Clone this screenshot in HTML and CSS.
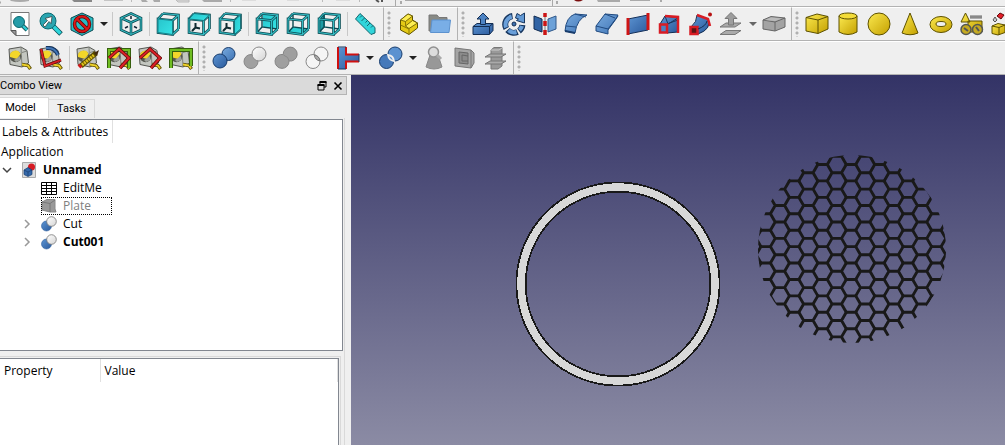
FILE: index.html
```html
<!DOCTYPE html>
<html lang="en">
<head>
<meta charset="utf-8">
<title>Unnamed</title>
<link rel="stylesheet" href="styles.css">
</head>
<body>
<svg class="sprite" aria-hidden="true">
  <defs>
    <linearGradient id="blue" x1="0" y1="0" x2="1" y2="1"><stop offset="0" stop-color="#5d95d3"/><stop offset="1" stop-color="#2b5a9c"/></linearGradient>
    <linearGradient id="sky" x1="0" y1="0" x2="1" y2="1"><stop offset="0" stop-color="#78aade"/><stop offset="1" stop-color="#3f74b5"/></linearGradient>
    <linearGradient id="gold" x1="0" y1="0" x2="1" y2="1"><stop offset="0" stop-color="#fbe94f"/><stop offset="1" stop-color="#c4a000"/></linearGradient>
    <linearGradient id="silver" x1="0" y1="0" x2="1" y2="1"><stop offset="0" stop-color="#fff"/><stop offset="1" stop-color="#d4d4d4"/></linearGradient>
    <linearGradient id="cyan" x1="0" y1="0" x2="1" y2="1"><stop offset="0" stop-color="#27c4cb"/><stop offset="1" stop-color="#36e4e6"/></linearGradient>
    <path id="cube-lines" d="M7 1.500 22.500 3V17M2 7 7 1.500M16.500 8.500 22.500 3M16.500 22.500 22.500 17M2 7 16.500 8.500V22.500L2 20.500Z"/>
    <path id="cube-back" d="M7 1.500V15L22.500 17M7 15 2 20.500"/>
    <path id="iso-lines" d="M12 1.500 22 6V18L12 22.500 2 18V6ZM2 6 12 10.500 22 6M12 10.500V22.500"/>
    <path id="triad" d="M8.500 15.500V11M8.500 15.500 13 16.500M8.500 15.500 5 19"/>
    <g id="tape-body">
      <path d="M1 3 13 1 19 4.500 20.500 17 14 21 2 18.500Z" fill="#c3c6c0" stroke="#555753"/>
      <path d="M13 1.500 14 20.500M19 5 14 6.500" stroke="#80837c" fill="none"/>
      <circle cx="7.500" cy="10.500" r="5.800" fill="#55574f"/>
      <path d="M2 11a5.500 5.500 0 0 1 10.500-3L9 13Z" fill="#f3d62a"/>
      <path d="M6 14 12 10 12.500 14 8 16Z" fill="#9da09a"/>
      <path d="M14 18.500 20 19.500 22.500 23" stroke="#5b4c00" stroke-width="3.500" fill="none"/>
      <path d="M14 18.500 20 19.500 22 22.500" stroke="#ecd02a" stroke-width="1.800" fill="none"/>
    </g>
    <symbol id="fit-all" viewBox="0 0 24 24"><path d="M3 .5H21V23.500H8L3 18.500Z" fill="#fff" stroke="#777"/><path d="M3 18.500H8V23.500Z" fill="#999" stroke="#555"/><path d="M14 13 19 18" stroke="#0b3a40" stroke-width="4"/><path d="M14 13 19 18" stroke="#2cc7ce" stroke-width="2.500"/><circle cx="11" cy="10" r="5.500" fill="#259ca8" stroke="#0b6870"/></symbol>
    <symbol id="fit-selection" viewBox="0 0 24 24"><path d="M13 13 22 22" stroke="#0b4a50" stroke-width="5"/><path d="M13 13 21.500 21.500" stroke="#2cd4da" stroke-width="3.500"/><circle cx="9" cy="9" r="8" fill="#2aa5b0" stroke="#0b6a72"/><path d="M4 13 8.500 8.500 6 6.500 13 4.500 12 11.500 10 9.500 6 15Z" fill="#fff" stroke="#333" stroke-width=".7"/></symbol>
    <symbol id="draw-style" viewBox="0 0 24 24"><path d="M12 1 23 6V18L12 23.500 1 18V6Z" fill="#29bcc4" stroke="#0b4a50"/><circle cx="12" cy="12" r="7.500" fill="none" stroke="#5c0505" stroke-width="3.500"/><path d="M7 7 17 17" stroke="#5c0505" stroke-width="3.500"/><circle cx="12" cy="12" r="7.500" fill="none" stroke="#dc1717" stroke-width="2"/><path d="M7 7 17 17" stroke="#dc1717" stroke-width="2"/></symbol>
    <symbol id="view-iso" viewBox="0 0 24 24"><use href="#iso-lines" class="edge-dark"/><use href="#iso-lines" class="edge-light"/><path d="M12 4V7M6 16 9 14.500M18 16 15 14.500" stroke="#123" stroke-width="1.500"/></symbol>
    <symbol id="view-front" viewBox="0 0 24 24"><use href="#cube-lines" class="edge-dark"/><use href="#cube-lines" class="edge-light"/><path d="M2 7 16.500 8.500V22.500L2 20.500Z" fill="url(#cyan)" stroke="#16838b"/></symbol>
    <symbol id="view-top" viewBox="0 0 24 24"><use href="#triad" class="triad"/><use href="#cube-lines" class="edge-dark"/><use href="#cube-lines" class="edge-light"/><path d="M2 7 7 1.500 22.500 3 16.500 8.500Z" fill="url(#cyan)" stroke="#16737b"/></symbol>
    <symbol id="view-right" viewBox="0 0 24 24"><use href="#triad" class="triad"/><use href="#cube-lines" class="edge-dark"/><use href="#cube-lines" class="edge-light"/><path d="M16.500 8.500 22.500 3V17L16.500 22.500Z" fill="url(#cyan)" stroke="#16737b"/></symbol>
    <symbol id="view-rear" viewBox="0 0 24 24"><path d="M8 2 22 3.500V16.500L8 15Z" fill="url(#cyan)"/><use href="#cube-back" class="edge-back"/><use href="#cube-lines" class="edge-dark"/><use href="#cube-lines" class="edge-light"/></symbol>
    <symbol id="view-bottom" viewBox="0 0 24 24"><path d="M2 20.500 7 15 22.500 17 16.500 22.500Z" fill="url(#cyan)"/><use href="#cube-back" class="edge-back"/><use href="#cube-lines" class="edge-dark"/><use href="#cube-lines" class="edge-light"/></symbol>
    <symbol id="view-left" viewBox="0 0 24 24"><path d="M2 7 8 1.500V15L2 20.500Z" fill="#1c9ba3"/><use href="#cube-back" class="edge-back"/><use href="#cube-lines" class="edge-dark"/><use href="#cube-lines" class="edge-light"/></symbol>
    <symbol id="ruler" viewBox="0 0 24 24"><path d="M6 1.500 21 15.500V21L17 22.500 1.500 7Z" fill="#31d5da" stroke="#15666e"/><path d="M8 3.500 6 5.500M10.500 6 7.500 9M13.500 8.500 11.500 10.500M16 11 13 14M19 13.500 17 15.500" stroke="#15666e"/></symbol>
    <symbol id="part" viewBox="0 0 24 24"><path d="M3.500 8 11 2 15.500 4V8L20.500 11V16L12 22.500 3.500 18Z" fill="#e5ca15" stroke="#5f5200"/><path d="M3.500 8 11 2 15.500 4 8.500 9.500ZM8.500 14 15.500 8.500 20.500 11 12 16.500Z" fill="#fdee52" stroke="#5f5200" stroke-width=".8"/><path d="M8.500 9.500V14M12 16.500V22M3.500 13 12 17" stroke="#8d7a05" fill="none"/></symbol>
    <symbol id="folder" viewBox="0 0 24 24"><path d="M1 3H9L11 5.500H19V19H1Z" fill="#888a85" stroke="#777"/><path d="M4 8H22.500L21 20.500H2.500Z" fill="#79aee6" stroke="#5c92cf"/></symbol>
    <symbol id="extrude" viewBox="0 0 24 24"><path d="M2 14.500 6 11.500H22V18.500L18.500 22.500H2Z" fill="url(#blue)" stroke="#132d52"/><path d="M2 14.500H18.500L22 11.500M18.500 14.500V22" fill="none" stroke="#132d52"/><path d="M12 1 18 7H14.500V12.500H9.500V7H6Z" fill="#4d83c4" stroke="#132d52"/></symbol>
    <symbol id="revolve" viewBox="0 0 24 24"><g fill="none" stroke="#17365f" stroke-width="6"><path d="M10.500 4A8.500 8.500 0 0 0 4.300 16.500"/><path d="M5.500 18A8.500 8.500 0 0 0 15.500 20"/><path d="M17 19A8.500 8.500 0 0 0 20.400 13"/></g><g fill="none" stroke="#6a9fd9" stroke-width="4"><path d="M9.700 4.500A8.500 8.500 0 0 0 4 15.500"/><path d="M6.500 18.300A8.500 8.500 0 0 0 14.500 20"/><path d="M17.500 18A8.500 8.500 0 0 0 20 14"/></g><path d="M15 1.500 18.500 3.500 22.500 1V11L14.500 8.500 16.500 7 13.500 6Z" fill="#6399d4" stroke="#17365f"/><circle cx="12" cy="12" r="2" fill="#3d70af" stroke="#132d52"/></symbol>
    <symbol id="mirror" viewBox="0 0 24 24"><path d="M1 4 9 7V20L1 17Z" fill="#3164a5" stroke="#132d52"/><path d="M23 4 15 7V20L23 17Z" fill="#6ca1d8" stroke="#30588a"/><path d="M12 1V5M12 9V14M12 18V23" stroke="#cc1515" stroke-width="3.500"/><path d="M12 5V9M12 14V18" stroke="#777"/></symbol>
    <symbol id="fillet" viewBox="0 0 24 24"><path d="M1 19Q2 5 11 2L23 3Q13 7 11 21Z" fill="url(#sky)" stroke="#204a80"/><path d="M2 14 12 15M11 2 22 5" stroke="#244f87" fill="none"/><path d="M1 19 11 21" stroke="#183c6c" stroke-width="2"/></symbol>
    <symbol id="chamfer" viewBox="0 0 24 24"><path d="M1 14 10 2 23 3 21 7 13 18V22L1 19Z" fill="url(#sky)" stroke="#204a80"/><path d="M1 14 13 17 23 4M10 2 20 6" stroke="#204a80" fill="none"/></symbol>
    <symbol id="ruled" viewBox="0 0 24 24"><path d="M2 7 22 3V18L2 22Z" fill="url(#blue)" stroke="#15315a"/><path d="M2 6V23M22 1V18" stroke="#cf1515" stroke-width="3"/></symbol>
    <symbol id="loft" viewBox="0 0 24 24"><path d="M3 12 8 4 21 6V20L10 21Z" fill="url(#blue)" stroke="#132d52"/><path d="M8 4 11 12 21 6M10 12 21 8" fill="none" stroke="#17365f"/><path d="M8 4 21 5V21" fill="none" stroke="#d81c24" stroke-width="2.500"/><path d="M3 12.500H10V20.500H3Z" fill="#4c82c4" stroke="#d81c24" stroke-width="2.500"/></symbol>
    <symbol id="sweep" viewBox="0 0 24 24"><path d="M3 15Q9 10 9 3L20 7Q24 17 10 22Z" fill="url(#blue)" stroke="#132d52"/><path d="M9 3 20 7 22 14" fill="none" stroke="#d81c24" stroke-width="2.500"/><path d="M2.500 15H9.500V22H2.500Z" fill="#5a1515" stroke="#d81c24" stroke-width="2.500"/><path d="M10 17Q18 14 19 9" stroke="#132d52" fill="none"/><circle cx="22" cy="2.500" r="2" fill="#b71111"/></symbol>
    <symbol id="offset" viewBox="0 0 24 24"><path d="M7 11H22L16 15H1ZM7 18.500H22L16 22.500H1Z" fill="#aaa" stroke="#777"/><path d="M12 .5 18 6.500H14.500V13H9.500V6.500H6Z" fill="#9d9d9d" stroke="#777"/></symbol>
    <symbol id="thickness" viewBox="0 0 24 24"><path d="M1 8 9 4.500 23 6V15L13 19 1 17Z" fill="#a3a3a3" stroke="#666"/><path d="M1 8 13 10 23 6M13 10V19" stroke="#666" fill="none"/><path d="M3 8 9 5.500 20 6.500 13 9Z" fill="#bbb"/></symbol>
    <symbol id="box" viewBox="0 0 24 24"><path d="M1 5.500 12 2 23 4.500V17L13 21.500 1 19Z" fill="url(#gold)" stroke="#5d5100"/><path d="M1 5.500 13 8 23 4.500M13 8V21.500" fill="none" stroke="#5d5100"/></symbol>
    <symbol id="cylinder" viewBox="0 0 24 24"><path d="M3 4V20Q12 25 21 20V4Z" fill="url(#gold)" stroke="#5d5100"/><ellipse cx="12" cy="4" rx="9" ry="3" fill="#f3dc38" stroke="#5d5100"/></symbol>
    <symbol id="sphere" viewBox="0 0 24 24"><circle cx="12" cy="12" r="11" fill="url(#gold)" stroke="#5d5100"/></symbol>
    <symbol id="cone" viewBox="0 0 24 24"><path d="M12 1 20 21Q12 24.500 4 21Z" fill="url(#gold)" stroke="#5d5100"/></symbol>
    <symbol id="torus" viewBox="0 0 24 24"><ellipse cx="12" cy="12.500" rx="11" ry="8" fill="url(#gold)" stroke="#5d5100"/><ellipse cx="12" cy="12" rx="5" ry="2.500" fill="#efefef" stroke="#5d5100"/></symbol>
    <symbol id="primitives" viewBox="0 0 24 24"><path d="M8 9H22V20H8ZM5.500 1 10 10H1Z" fill="url(#gold)" stroke="#5d5100"/><path d="M10 5H22" stroke="#666" stroke-width="3"/><path d="M10 5H22" stroke="#aaa"/><g fill="#c5aa21" stroke="#555753" stroke-width="1.500"><circle cx="6" cy="17.500" r="5"/><circle cx="17.500" cy="17.500" r="5"/></g><path d="M4 16 8 19M16 15 19 19" stroke="#555" stroke-width="2"/></symbol>
    <symbol id="builder" viewBox="0 0 24 24"><path d="M1 14 7 11.500 14 13V20.500L7 23 1 21.500Z" fill="url(#gold)" stroke="#5d5100"/><path d="M1 14 8 15.500 14 13M8 15.500V23" fill="none" stroke="#5d5100"/><path d="M2 8 4 5 6 8 4 10Z" fill="#ccc" stroke="#555"/><path d="M6 4 9 1 13 3 10 7Z" fill="#e51e28" stroke="#650909"/></symbol>
    <symbol id="measure-linear" viewBox="0 0 24 24"><use href="#tape-body"/></symbol>
    <symbol id="measure-angular" viewBox="0 0 24 24"><use href="#tape-body"/><path d="M7 2Q16 1 19 9" fill="none" stroke="#17365f" stroke-width="4"/><path d="M7 2Q16 1 19 9" fill="none" stroke="#4276b6" stroke-width="2"/><path d="M2 3 6 20 22 14" fill="none" stroke="#5e0909" stroke-width="3"/><path d="M2 3 6 20 22 14" fill="none" stroke="#d92027" stroke-width="1.800"/></symbol>
    <symbol id="measure-refresh" viewBox="0 0 24 24"><use href="#tape-body"/><path d="M5 20 20 7" stroke="#574900" stroke-width="5"/><path d="M6 19 18 9" stroke="#dfc11b" stroke-width="3" stroke-dasharray="2 .7"/><path d="M3 21 5 19" stroke="#cf1b1b" stroke-width="4"/><path d="M18 7 23 4 21 10Z" fill="#432a10"/></symbol>
    <symbol id="measure-toggle" viewBox="0 0 24 24"><use href="#tape-body"/><path d="M2 22V4H22V22" fill="none" stroke="#365f0e" stroke-width="4"/><path d="M2 22V4H22V22" fill="none" stroke="#70be23" stroke-width="2"/><path d="M2 12 12 3 22 12 13 22" fill="none" stroke="#5e0909" stroke-width="3.500"/><path d="M2 12 12 3 22 12 13 22" fill="none" stroke="#db2028" stroke-width="2"/></symbol>
    <symbol id="measure-3d" viewBox="0 0 24 24"><use href="#tape-body"/><path d="M2 12 12 3 22 12 13 22" fill="none" stroke="#5e0909" stroke-width="3.500"/><path d="M2 12 12 3 22 12 13 22" fill="none" stroke="#db2028" stroke-width="2"/></symbol>
    <symbol id="measure-delta" viewBox="0 0 24 24"><use href="#tape-body"/><path d="M2 22V4H22V20" fill="none" stroke="#365f0e" stroke-width="4"/><path d="M2 22V4H22V20" fill="none" stroke="#70be23" stroke-width="2"/></symbol>
    <symbol id="boolean" viewBox="0 0 24 24"><circle cx="16.500" cy="8" r="6.500" fill="url(#sky)" stroke="#183d6e"/><circle cx="8" cy="15" r="7" fill="url(#blue)" stroke="#183d6e"/></symbol>
    <symbol id="cut-off" viewBox="0 0 24 24"><circle cx="8" cy="15.500" r="7" fill="#a0a0a0" stroke="#888"/><circle cx="16" cy="8" r="7" fill="url(#silver)" stroke="#888"/></symbol>
    <symbol id="union" viewBox="0 0 24 24"><path d="M9.200 8.500A7 7 0 1 1 15 15A7 7 0 1 1 9.200 8.500Z" fill="#9f9f9f" stroke="#858585"/><path d="M9.500 9Q15 11 15 15" fill="none" stroke="#8a8a8a"/></symbol>
    <symbol id="common" viewBox="0 0 24 24"><circle cx="16" cy="8" r="7" fill="#f5f5f5" stroke="#888"/><circle cx="8" cy="15.500" r="7" fill="#f5f5f5" stroke="#888"/><path d="M9.300 9A7 7 0 0 1 15 15A7 7 0 0 1 9.300 9Z" fill="#aaa" stroke="#777"/></symbol>
    <symbol id="join" viewBox="0 0 24 24"><path d="M1 1.500H9.500V8.500H23V16H9.500V23H1Z" fill="url(#blue)"/><path d="M2 1V23M10 1V8.500H23M10 23V15.500H23" fill="none" stroke="#cf1010" stroke-width="2"/><path d="M2 1H10M2 23H10M23 8V16" stroke="#17365f"/></symbol>
    <symbol id="split" viewBox="0 0 24 24"><circle cx="16" cy="8" r="7" fill="#5b92d0" stroke="#183d6e"/><circle cx="7.500" cy="15.500" r="7" fill="#4579ba" stroke="#183d6e"/><path d="M9 9A7 7 0 0 1 15 15A7 7 0 0 1 9 9Z" fill="#5b92d0" stroke="#eee" stroke-width="1.800"/></symbol>
    <symbol id="check" viewBox="0 0 24 24"><path d="M8 9H16L20 21Q12 25 4 21Z" fill="#989898" stroke="#888"/><circle cx="11.500" cy="6" r="5" fill="#ddd" stroke="#909090" stroke-width="1.500"/><path d="M15 9 19 13" stroke="#aaa" stroke-width="3"/></symbol>
    <symbol id="section" viewBox="0 0 24 24"><path d="M2 2 18 4 21 7V17L18 22 2 20Z" fill="#a5a5a5" stroke="#777"/><path d="M6 6 15 7V18L6 17ZM9 9V15M9 9 15 10M9 15H15" fill="#8b8b8b" stroke="#666"/><path d="M18 4V22" stroke="#777"/></symbol>
    <symbol id="cross-sections" viewBox="0 0 24 24"><path d="M7 4 10 1.500H18V20L14 23H7Z" fill="#999" stroke="#777"/><path d="M1 11 6 8H22L17 11ZM1 18 6 15H22L17 18Z" fill="#aaa" stroke="#777"/><path d="M7 4H15L18 2" fill="none" stroke="#ccc"/></symbol>
    <symbol id="document" viewBox="0 0 16 16"><path d="M1.500.5H14.500V15.500H1.500Z" fill="#ddd" stroke="#aaa"/><circle cx="10.500" cy="5" r="3.500" fill="#d51b24"/><path d="M3 8 7 5.500 11 8V12.500L7 14.500 3 12.500Z" fill="#3569aa" stroke="#183d6e" stroke-width=".7"/><path d="M3 8 7 10 11 8M7 10V14" stroke="#183d6e" fill="none" stroke-width=".7"/></symbol>
    <symbol id="sheet" viewBox="0 0 16 16"><path d="M.5 2.500H15.500V14.500H.5ZM.5 5.500H15.500M.5 8.500H15.500M.5 11.500H15.500M5.500 2V14M10.500 2V14" fill="#fff" stroke="#000"/></symbol>
    <symbol id="plate" viewBox="0 0 16 16"><path d="M1 4 6 1.500H14V11L15 14H9L1 12Z" fill="#999" stroke="#888"/><path d="M1 4 9 5.500 14 2M9 5.500V14" fill="none" stroke="#777"/></symbol>
    <symbol id="cut" viewBox="0 0 16 16"><circle cx="5.500" cy="10" r="5" fill="url(#blue)" stroke="#3162a0" stroke-width=".6"/><circle cx="10.500" cy="5.500" r="4.800" fill="url(#silver)" stroke="#777" stroke-width=".8"/></symbol>
  </defs>
</svg>

<div class="window">
  <header class="toolbars">
    <div class="toolbar-row toolbar-row-clipped">
      <svg width="670" height="6" viewBox="0 0 670 6" aria-hidden="true">
        <path d="M10 0H29V1Q20 3 11 1Z" fill="#aaa"/><path d="M72 0H92V2H74Z" fill="#888"/><path d="M104 0H123V1H104Z" fill="#c5c5c5"/>
        <path d="M141 0H146L148 2H142ZM153 0H160V2H154Z" fill="#aaa"/><path d="M176 0H189V2H178Z" fill="#ddd" stroke="#bbb"/><path d="M202 0H222V2H204Z" fill="#aaa"/>
        <path d="M242 0H256M287 0H299M336 0H350" stroke="#ccc"/><path d="M376 0 379 2M382 0V2" stroke="#555" stroke-width="2"/>
        <path d="M131.500 0V2M230.500 0V2M322.500 0V2M359.500 0V2" stroke="#bbb"/>
        <path d="M395.500 0V6M552.500 0V6M405 .5H551" stroke="#aaa"/><path d="M0 1.500V3.500M401 1V4M557 1V4" stroke="#aaa" stroke-width="2"/>
        <path d="M574 0H583Q578 3 574 0Z" fill="#7a0c0c"/><path d="M597 0H620V2H598ZM630 0H650V1H630ZM660 0H662V2H660Z" fill="#aaa"/>
      </svg>
    </div>
    <div class="toolbar-row">
      <div class="toolbar toolbar-first" role="toolbar" aria-label="View">
        <button class="tool" aria-label="Fit all"><svg><use href="#fit-all"/></svg></button>
        <button class="tool" aria-label="Fit selection"><svg><use href="#fit-selection"/></svg></button>
        <button class="tool" aria-label="Draw style"><svg><use href="#draw-style"/></svg></button>
        <button class="menu-arrow" aria-label="Draw style options"></button>
        <span class="separator"></span>
        <button class="tool" aria-label="Isometric"><svg><use href="#view-iso"/></svg></button>
        <span class="separator"></span>
        <button class="tool" aria-label="Front"><svg><use href="#view-front"/></svg></button>
        <button class="tool" aria-label="Top"><svg><use href="#view-top"/></svg></button>
        <button class="tool" aria-label="Right"><svg><use href="#view-right"/></svg></button>
        <span class="separator"></span>
        <button class="tool" aria-label="Rear"><svg><use href="#view-rear"/></svg></button>
        <button class="tool" aria-label="Bottom"><svg><use href="#view-bottom"/></svg></button>
        <button class="tool" aria-label="Left"><svg><use href="#view-left"/></svg></button>
        <span class="separator"></span>
        <button class="tool" aria-label="Measure distance"><svg><use href="#ruler"/></svg></button>
      </div>
      <div class="toolbar" role="toolbar" aria-label="Structure">
        <span class="grip"></span>
        <button class="tool" aria-label="Create part"><svg><use href="#part"/></svg></button>
        <button class="tool" aria-label="Create group"><svg><use href="#folder"/></svg></button>
      </div>
      <div class="toolbar" role="toolbar" aria-label="Part tools">
        <span class="grip"></span>
        <button class="tool" aria-label="Extrude"><svg><use href="#extrude"/></svg></button>
        <button class="tool" aria-label="Revolve"><svg><use href="#revolve"/></svg></button>
        <button class="tool" aria-label="Mirror"><svg><use href="#mirror"/></svg></button>
        <button class="tool" aria-label="Fillet"><svg><use href="#fillet"/></svg></button>
        <button class="tool" aria-label="Chamfer"><svg><use href="#chamfer"/></svg></button>
        <button class="tool" aria-label="Ruled surface"><svg><use href="#ruled"/></svg></button>
        <button class="tool" aria-label="Loft"><svg><use href="#loft"/></svg></button>
        <button class="tool" aria-label="Sweep"><svg><use href="#sweep"/></svg></button>
        <button class="tool" aria-label="Offset"><svg><use href="#offset"/></svg></button>
        <button class="menu-arrow menu-arrow-dim" aria-label="Offset options"></button>
        <button class="tool" aria-label="Thickness"><svg><use href="#thickness"/></svg></button>
      </div>
      <div class="toolbar toolbar-last" role="toolbar" aria-label="Solids">
        <span class="grip"></span>
        <button class="tool" aria-label="Box"><svg><use href="#box"/></svg></button>
        <button class="tool" aria-label="Cylinder"><svg><use href="#cylinder"/></svg></button>
        <button class="tool" aria-label="Sphere"><svg><use href="#sphere"/></svg></button>
        <button class="tool" aria-label="Cone"><svg><use href="#cone"/></svg></button>
        <button class="tool" aria-label="Torus"><svg><use href="#torus"/></svg></button>
        <button class="tool" aria-label="Primitives"><svg><use href="#primitives"/></svg></button>
        <button class="tool" aria-label="Shape builder"><svg><use href="#builder"/></svg></button>
      </div>
    </div>
    <div class="toolbar-row">
      <div class="toolbar toolbar-first" role="toolbar" aria-label="Measure">
        <button class="tool" aria-label="Measure linear"><svg><use href="#measure-linear"/></svg></button>
        <button class="tool" aria-label="Measure angular"><svg><use href="#measure-angular"/></svg></button>
        <span class="separator"></span>
        <button class="tool" aria-label="Refresh"><svg><use href="#measure-refresh"/></svg></button>
        <button class="tool" aria-label="Toggle all"><svg><use href="#measure-toggle"/></svg></button>
        <button class="tool" aria-label="Toggle 3D"><svg><use href="#measure-3d"/></svg></button>
        <button class="tool" aria-label="Toggle delta"><svg><use href="#measure-delta"/></svg></button>
      </div>
      <div class="toolbar" role="toolbar" aria-label="Boolean">
        <span class="grip"></span>
        <button class="tool" aria-label="Boolean"><svg><use href="#boolean"/></svg></button>
        <button class="tool" aria-label="Cut"><svg><use href="#cut-off"/></svg></button>
        <button class="tool" aria-label="Union"><svg><use href="#union"/></svg></button>
        <button class="tool" aria-label="Intersection"><svg><use href="#common"/></svg></button>
        <button class="tool" aria-label="Join"><svg><use href="#join"/></svg></button>
        <button class="menu-arrow" aria-label="Join options"></button>
        <button class="tool" aria-label="Split"><svg><use href="#split"/></svg></button>
        <button class="menu-arrow" aria-label="Split options"></button>
        <button class="tool" aria-label="Check geometry"><svg><use href="#check"/></svg></button>
        <button class="tool" aria-label="Section"><svg><use href="#section"/></svg></button>
        <button class="tool" aria-label="Cross-sections"><svg><use href="#cross-sections"/></svg></button>
      </div>
      <div class="toolbar toolbar-last"><span class="grip"></span></div>
    </div>
  </header>

  <div class="workspace">
    <aside class="combo">
      <div class="dock-title">
        <span class="dock-name">Combo View</span>
        <button class="dock-button" aria-label="Float"><svg viewBox="0 0 10 10"><path d="M3 3V1H9V6H7M1 4H7V9H1Z" fill="none" stroke="#000"/><path d="M2.500 1H9.500M.5 4H7.500" stroke="#000" stroke-width="2"/></svg></button>
        <button class="dock-button" aria-label="Close"><svg viewBox="0 0 10 10"><path d="M1.500 1.500 8.500 8.500M8.500 1.500 1.500 8.500" stroke="#000" stroke-width="1.600"/></svg></button>
      </div>
      <div class="tabs" role="tablist">
        <button class="tab tab-active" role="tab" aria-selected="true">Model</button>
        <button class="tab" role="tab" aria-selected="false">Tasks</button>
      </div>
      <div class="tab-pane">
        <section class="tree">
          <div class="tree-header">Labels &amp; Attributes</div>
          <div class="tree-root">Application</div>
          <ul class="tree-list">
            <li class="tree-row"><button class="expander" aria-label="Collapse"><svg viewBox="0 0 10 10"><path d="M1 3 5 7 9 3" fill="none" stroke="#444" stroke-width="1.500"/></svg></button><svg class="node-icon"><use href="#document"/></svg><span class="node-label strong">Unnamed</span></li>
            <li class="tree-row child"><svg class="node-icon"><use href="#sheet"/></svg><span class="node-label">EditMe</span></li>
            <li class="tree-row child"><span class="focused"><svg class="node-icon"><use href="#plate"/></svg><span class="node-label dim">Plate</span></span></li>
            <li class="tree-row branch"><button class="expander" aria-label="Expand"><svg viewBox="0 0 10 10"><path d="M3 1 7 5 3 9" fill="none" stroke="#999" stroke-width="1.500"/></svg></button><svg class="node-icon"><use href="#cut"/></svg><span class="node-label">Cut</span></li>
            <li class="tree-row branch"><button class="expander" aria-label="Expand"><svg viewBox="0 0 10 10"><path d="M3 1 7 5 3 9" fill="none" stroke="#999" stroke-width="1.500"/></svg></button><svg class="node-icon"><use href="#cut"/></svg><span class="node-label strong">Cut001</span></li>
          </ul>
        </section>
        <section class="property-frame">
          <div class="property-view">
            <table class="properties">
              <thead><tr><th class="col-property">Property</th><th>Value</th></tr></thead>
            </table>
          </div>
        </section>
      </div>
    </aside>
    <main class="viewport">
      <svg class="scene" viewBox="0 0 654 370" preserveAspectRatio="xMinYMin meet" role="img" aria-label="Ring and hexagonal mesh">
        <defs>
          <path id="cell-pair" d="M-4.740 0H4.740L9.480 8.210H18.960L23.700 0M9.480 8.210 4.740 16.420M18.960 8.210 23.700 16.420"/>
          <g id="four-pairs"><use href="#cell-pair"/><use href="#cell-pair" x="28.440"/><use href="#cell-pair" x="56.880"/><use href="#cell-pair" x="85.320"/></g>
          <g id="mesh-row"><use href="#four-pairs" x="-113.760"/><use href="#four-pairs"/></g>
          <g id="four-rows"><use href="#mesh-row"/><use href="#mesh-row" y="16.420"/><use href="#mesh-row" y="32.840"/><use href="#mesh-row" y="49.260"/></g>
          <clipPath id="disc"><circle cx="501" cy="174" r="94"/></clipPath>
        </defs>
        <g shape-rendering="crispEdges" fill="none">
          <circle cx="267" cy="209" r="97" stroke="#191919" stroke-width="11"/>
          <circle cx="267" cy="209" r="97" stroke="#d8d8d8" stroke-width="7.500"/>
        </g>
        <g clip-path="url(#disc)">
          <g transform="translate(500 89.500)" fill="none" stroke="#191919" stroke-width="2.900" stroke-linecap="round">
            <use href="#four-rows" y="-16.420"/><use href="#four-rows" y="49.260"/><use href="#four-rows" y="114.940"/>
          </g>
        </g>
      </svg>
    </main>
  </div>
</div>
</body>
</html>
```

FILE: styles.css
```css
* { box-sizing: border-box; }

body {
  margin: 0;
  font-family: "Open Sans", "Noto Sans", sans-serif;
  font-size: 12px;
  line-height: 18px;
  color: #000;
}

button {
  margin: 0;
  padding: 0;
  border: 0;
  background: none;
  font: inherit;
  color: inherit;
}

svg { display: block; }
.sprite { position: absolute; width: 0; height: 0; }

.edge-dark { fill: none; stroke: #0b4a52; stroke-width: 2.6; }
.edge-light { fill: none; stroke: #35bcc3; stroke-width: 1.1; }
.edge-back { fill: none; stroke: #0b4a52; stroke-width: 1.4; }
.triad { fill: none; stroke: #102a30; stroke-width: 2; }

.window {
  display: flex;
  flex-direction: column;
  height: 100vh;
  overflow: hidden;
  background: #efefef;
}

.toolbars { flex: none; }

.toolbar-row {
  display: flex;
  height: 34px;
  overflow: hidden;
  border-bottom: 1px solid #b2b2b2;
}

.toolbar-row-clipped { height: 7px; }

.toolbar {
  display: flex;
  flex: none;
  align-items: center;
  padding-right: 1px;
  border-top: 1px solid #fff;
  border-right: 1px solid #b2b2b2;
}

.toolbar-first { padding-left: 5px; }
.toolbar-last { flex: 1 0 auto; border-right: 0; }

.tool {
  flex: none;
  width: 31px;
  padding: 0 4px 0 3px;
}

.tool svg { width: 24px; height: 24px; }

.menu-arrow {
  display: flex;
  justify-content: center;
  width: 12px;
}

.menu-arrow::after {
  content: "";
  border: 4px solid transparent;
  border-top-color: #222;
  border-bottom: 0;
}

.menu-arrow-dim::after { border-top-color: #666; }

.separator {
  width: 6px;
  height: 24px;
  background: linear-gradient(#c8c8c8, #c8c8c8) 2px 0 / 1px 100% no-repeat;
}

.grip {
  width: 10px;
  height: 26px;
  background: radial-gradient(circle at 2px 2px, #b0b0b0 1px, transparent 2px) 3px 0 / 4px 5px repeat-y;
}

.workspace {
  display: flex;
  flex: 1;
  min-height: 0;
}

.combo {
  display: flex;
  flex: none;
  flex-direction: column;
  width: 351px;
  padding: 1px 4px 0 0;
}

.dock-title {
  display: flex;
  align-items: center;
  gap: 6px;
  height: 19px;
  padding-right: 3px;
  border: 1px solid #b4b4b4;
  border-left: 0;
  background: #dadada;
}

.dock-name,
.tab {
  font-family: Roboto, sans-serif;
  font-size: 11px;
}

.dock-name { flex: 1; }
.dock-button svg { width: 10px; height: 10px; }

.tabs {
  display: flex;
  align-items: flex-end;
  height: 23px;
  padding-top: 2px;
}

.tab {
  width: 46px;
  height: 19px;
  border: 1px solid #d9d9d9;
  border-width: 1px 1px 0 0;
}

.tab-active {
  width: 49px;
  height: 21px;
  padding: 0 12px 0 5px;
  background: #fff;
}

.tab-pane {
  display: flex;
  flex: 1;
  flex-direction: column;
  gap: 5px;
  margin-right: 2px;
  padding: 1px 1px 0 0;
  min-height: 0;
  border: 1px solid #d9d9d9;
  border-width: 0 1px 0 0;
}

.tree {
  flex: 1 1 232px;
  border: 1px solid #828790;
  border-left: 0;
  background: #fff;
}

.tree-header {
  width: 113px;
  height: 23px;
  padding: 3px 0 0 2px;
  border-right: 1px solid #e0e0e0;
}

.tree-root { padding-left: 1px; }

.tree-list {
  margin: 0;
  padding: 0;
  list-style: none;
}

.tree-row {
  display: flex;
  align-items: center;
  height: 18px;
  padding-left: 2px;
}

.child { padding-left: 41px; }
.branch { padding-left: 22px; }

.expander {
  width: 10px;
  margin-right: 9px;
}

.expander svg { width: 10px; height: 10px; }
.node-icon { flex: none; width: 16px; height: 16px; }
.node-label { margin-left: 6px; }
.strong { font-weight: 700; }
.dim { color: #808080; }

.focused {
  display: flex;
  align-items: center;
  width: 71px;
  height: 18px;
  outline: 1px dotted #000;
  outline-offset: -1px;
}

.property-frame {
  flex: 0 1 89px;
  margin-right: 2px;
  padding: 1px 1px 0 0;
  border: 1px solid #d9d9d9;
  border-width: 1px 1px 0 0;
}

.property-view {
  height: 100%;
  border: 1px solid #828790;
  border-width: 1px 1px 0 0;
  background: #fff;
}

.properties {
  width: 100%;
  border-collapse: collapse;
}

.properties th {
  height: 23px;
  padding: 0 4px;
  border-right: 1px solid #e0e0e0;
  font-weight: 400;
  text-align: left;
}

.properties .col-property { width: 100px; }

.viewport {
  flex: 1;
  min-width: 0;
  background: linear-gradient(#333366, #8b8ba4);
}

.scene { width: 100%; height: 100%; }
```
